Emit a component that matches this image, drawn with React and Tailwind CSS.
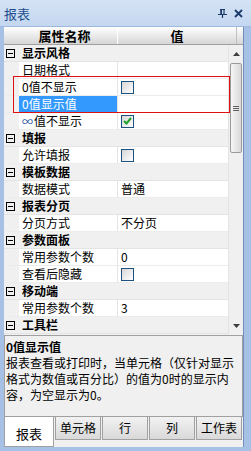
import React from 'react';

// Property grid panel ("报表") in a Windows-style dock frame.

const FONT = { fontFamily: '"Noto Sans CJK SC", "Liberation Sans", sans-serif' };

const rows = [
  { group: true, label: '显示风格' },
  { label: '日期格式' },
  { label: '0值不显示', check: false },
  { label: '0值显示值', selected: true },
  { label: '∞值不显示', check: true, infinity: true },
  { group: true, label: '填报' },
  { label: '允许填报', check: false },
  { group: true, label: '模板数据' },
  { label: '数据模式', value: '普通' },
  { group: true, label: '报表分页' },
  { label: '分页方式', value: '不分页' },
  { group: true, label: '参数面板' },
  { label: '常用参数个数', value: '0' },
  { label: '查看后隐藏', check: false },
  { group: true, label: '移动端' },
  { label: '常用参数个数', value: '3' },
  { group: true, label: '工具栏' },
];

const tabs = ['报表', '单元格', '行', '列', '工作表'];

function Checkbox({ checked }) {
  return (
    <span className="w-[13px] h-[13px] border border-[#1c5180] bg-gradient-to-br from-[#d6d6d6] to-white flex items-center justify-center">
      {checked && (
        <svg width="9" height="8" viewBox="0 0 9 8">
          <path d="M1 4 L3.5 6.5 L8 1" stroke="#21a02a" strokeWidth="2" fill="none" />
        </svg>
      )}
    </span>
  );
}

function Collapse() {
  return (
    <span className="w-[9px] h-[9px] border border-black flex items-center justify-center">
      <span className="w-[5px] h-px bg-black" />
    </span>
  );
}

function Row({ row }) {
  if (row.group) {
    return (
      <div className="h-[17px] flex items-center bg-[#f0f0f0] border-b border-[#e4e4e4]">
        <div className="w-[15px] h-full flex items-center justify-end pr-[4px]">
          <Collapse />
        </div>
        <span className="pl-[3px] text-[12px] font-bold text-black leading-none">{row.label}</span>
      </div>
    );
  }
  return (
    <div className="h-[17px] flex bg-white border-b border-[#ececec]">
      <div className="w-[15px] h-full bg-[#f0f0f0]" />
      <div
        className={`w-[99px] h-full flex items-center pl-[3px] text-[12px] leading-none border-r border-[#e4e4e4] ${row.selected ? 'bg-[#3399ff] text-white' : 'text-black'}`}
      >
        {row.infinity ? (
          <>
            <span className="text-[#1c4f9c] text-[11px] mr-px">∞</span>
            <span>值不显示</span>
          </>
        ) : row.label}
      </div>
      <div className="flex-1 h-full flex items-center pl-[3px] text-[12px] leading-none text-black">
        {row.check !== undefined && <Checkbox checked={row.check} />}
        {row.value && <span>{row.value}</span>}
      </div>
    </div>
  );
}

function Scrollbar() {
  return (
    <div className="w-[14px] h-full bg-[#f0f0f0] flex flex-col items-center">
      <div className="h-[17px] flex items-center justify-center">
        <svg width="7" height="4" viewBox="0 0 7 4"><path d="M0 4 L3.5 0 L7 4 Z" fill="#404040" /></svg>
      </div>
      <div className="w-[12px] h-[90px] mt-px rounded-[2px] border border-[#9a9a9a] bg-gradient-to-r from-[#f6f6f6] to-[#d9d9d9] flex flex-col items-center justify-center gap-px">
        <span className="w-[6px] h-px bg-[#606060]" />
        <span className="w-[6px] h-px bg-[#606060]" />
        <span className="w-[6px] h-px bg-[#606060]" />
      </div>
      <div className="flex-1" />
      <div className="h-[17px] flex items-center justify-center">
        <svg width="7" height="4" viewBox="0 0 7 4"><path d="M0 0 L3.5 4 L7 0 Z" fill="#404040" /></svg>
      </div>
    </div>
  );
}

export default function App() {
  return (
    <div className="w-[251px] h-[451px] bg-[#a7c1e6] flex flex-col overflow-hidden" style={FONT}>
      <div className="h-[27px] flex items-center pl-[4px] pr-[8px] bg-gradient-to-b from-[#d5e3f5] to-[#c4d7f0] border-b border-[#9fb9de]">
        <span className="text-[13px] text-[#1f4e8e] leading-none">报表</span>
        <div className="flex-1" />
        <svg width="9" height="9" viewBox="0 0 9 9" className="mr-[7px]">
          <path d="M2 0.5 H7 M3 0.5 V5 M6 0.5 V5 M0 5.5 H9 M4.5 5.5 V9" stroke="#1b3a6b" strokeWidth="1.2" fill="none" />
          <rect x="2.6" y="0.5" width="1.4" height="5" fill="#1b3a6b" />
        </svg>
        <svg width="9" height="9" viewBox="0 0 9 9">
          <path d="M1 1 L8 8 M8 1 L1 8" stroke="#1b3a6b" strokeWidth="1.8" />
        </svg>
      </div>

      <div className="ml-[4px] w-[240px] h-[420px] flex flex-col bg-[#f0f0f0] border-r border-[#6f8fbf]">
        <div className="h-[18px] flex bg-gradient-to-b from-white to-[#d6d6d6] border-b border-[#a0a0a0] text-[13px] font-bold text-black leading-none">
          <div className="w-[114px] h-full flex items-center justify-center pl-[8px] border-r border-white">属性名称</div>
          <div className="w-[119px] h-full flex items-center justify-center border-r border-[#c0c0c0]">值</div>
          <div className="flex-1" />
        </div>

        <div className="h-[289px] flex relative">
          <div className="w-[225px] h-full flex flex-col border-r border-[#e4e4e4]">
            {rows.map((row, i) => (
              <Row key={i} row={row} />
            ))}
          </div>
          <Scrollbar />
          <div className="absolute left-[9px] top-[31px] w-[217px] h-[37px] border border-[#e01010] pointer-events-none" />
        </div>

        <div className="mt-px h-[82px] border border-[#a0a0a0] bg-[#f0f0f0] px-[1px] pt-[3px] text-[12px] text-black">
          <div className="font-bold leading-[16px]">0值显示值</div>
          <div className="leading-[16px]">
            <div>报表查看或打印时，当单元格（仅针对显示</div>
            <div>格式为数值或百分比）的值为0时的显示内</div>
            <div>容，为空显示为0。</div>
          </div>
        </div>

        <div className="h-[30px] flex items-start gap-px pr-[1px]">
          {tabs.map((t, i) =>
            i === 0 ? (
              <div key={t} className="w-[50px] h-[30px] bg-white border-x border-b border-[#a0a0a0] flex items-center justify-center text-[13px] leading-none pt-[3px]">
                {t}
              </div>
            ) : (
              <div key={t} className="flex-1 h-[23px] bg-gradient-to-b from-[#f2f2f2] to-[#d9d9d9] border border-t-0 border-[#a0a0a0] flex items-center justify-center text-[12px] leading-none">
                {t}
              </div>
            )
          )}
        </div>
      </div>
    </div>
  );
}
